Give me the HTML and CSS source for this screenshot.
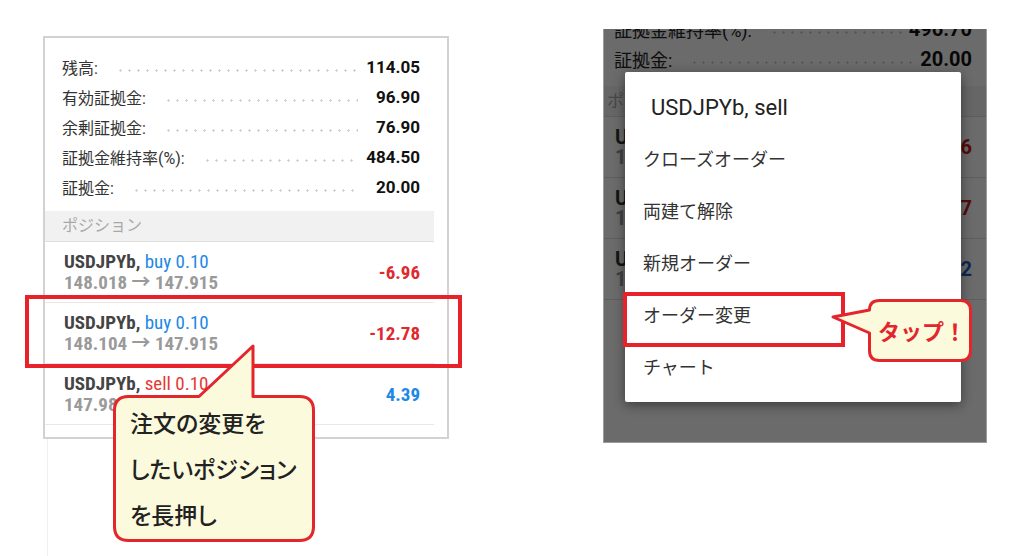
FILE: index.html
```html
<!DOCTYPE html>
<html lang="ja">
<head>
    <meta charset="UTF-8">
    <meta name="viewport" content="width=device-width, initial-scale=1.0">
    <title>オーダー変更の手順</title>
    <link rel="stylesheet" href="styles.css">
</head>
<body>
    <div class="page">
        <!-- 左: ポジション一覧 -->
        <div class="step step-left">
            <div class="screen">
                <div class="summary">
                    <div class="sum-row"><span class="sum-label">残高:</span><span class="leader"></span><span class="sum-value">114.05</span></div>
                    <div class="sum-row"><span class="sum-label">有効証拠金:</span><span class="leader"></span><span class="sum-value">96.90</span></div>
                    <div class="sum-row"><span class="sum-label">余剰証拠金:</span><span class="leader"></span><span class="sum-value">76.90</span></div>
                    <div class="sum-row"><span class="sum-label">証拠金維持率(%):</span><span class="leader"></span><span class="sum-value">484.50</span></div>
                    <div class="sum-row"><span class="sum-label">証拠金:</span><span class="leader"></span><span class="sum-value">20.00</span></div>
                </div>
                <div class="section">ポジション</div>
                <div class="positions">
                    <div class="pos">
                        <div class="pos-info">
                            <div class="pos-title"><b>USDJPYb,</b> <span class="buy">buy 0.10</span></div>
                            <div class="pos-price">148.018 → 147.915</div>
                        </div>
                        <div class="pos-profit loss">-6.96</div>
                    </div>
                    <div class="pos">
                        <div class="pos-info">
                            <div class="pos-title"><b>USDJPYb,</b> <span class="buy">buy 0.10</span></div>
                            <div class="pos-price">148.104 → 147.915</div>
                        </div>
                        <div class="pos-profit loss">-12.78</div>
                    </div>
                    <div class="pos">
                        <div class="pos-info">
                            <div class="pos-title"><b>USDJPYb,</b> <span class="sell">sell 0.10</span></div>
                            <div class="pos-price">147.988 → 147.915</div>
                        </div>
                        <div class="pos-profit gain">4.39</div>
                    </div>
                </div>
            </div>
            <div class="guide-line"></div>

            <div class="mark mark-position"></div>
            <div class="callout callout-press">
                <svg class="callout-shape" width="202" height="147" viewBox="0 0 202 147">
                    <path d="M15.5 1.5 H86 L140 -49 V1.5 H186.5 Q200.5 1.5 200.5 15.5 V131.5 Q200.5 145.5 186.5 145.5 H15.5 Q1.5 145.5 1.5 131.5 V15.5 Q1.5 1.5 15.5 1.5 Z"/>
                </svg>
                <div class="callout-text">注文の変更を<br>したいポジション<br>を長押し</div>
            </div>
        </div>

        <!-- 右: 長押しメニュー -->
        <div class="step step-right">
            <div class="screen-dark">
                <div class="bg-sum-row bg-first"><span class="bg-label">証拠金維持率(%):</span><span class="leader"></span><span class="bg-value">496.70</span></div>
                <div class="bg-sum-row"><span class="bg-label">証拠金:</span><span class="leader"></span><span class="bg-value">20.00</span></div>
                <div class="bg-section">ポジション</div>
                <div class="bg-pos">
                    <div class="bg-info"><div>USDJPYb, buy 0.10</div><div class="bg-price">148.018 → 147.915</div></div>
                    <div class="bg-profit loss">-7.06</div>
                </div>
                <div class="bg-pos">
                    <div class="bg-info"><div>USDJPYb, buy 0.10</div><div class="bg-price">148.104 → 147.915</div></div>
                    <div class="bg-profit loss">-12.87</div>
                </div>
                <div class="bg-pos">
                    <div class="bg-info"><div>USDJPYb, sell 0.10</div><div class="bg-price">147.988 → 147.915</div></div>
                    <div class="bg-profit gain">4.32</div>
                </div>
                <div class="dim"></div>
                <div class="dialog">
                    <div class="dialog-title">USDJPYb, sell</div>
                    <div class="dialog-item">クローズオーダー</div>
                    <div class="dialog-item">両建て解除</div>
                    <div class="dialog-item">新規オーダー</div>
                    <div class="dialog-item">オーダー変更</div>
                    <div class="dialog-item">チャート</div>
                </div>
            </div>

            <div class="mark mark-menu"></div>
            <div class="callout callout-tap">
                <svg class="callout-shape" width="104" height="63" viewBox="0 0 104 63">
                    <path d="M11.5 1.5 H92.5 Q102.5 1.5 102.5 11.5 V51.5 Q102.5 61.5 92.5 61.5 H11.5 Q1.5 61.5 1.5 51.5 V34 L-35 18 L1.5 11 Q1.5 1.5 11.5 1.5 Z"/>
                </svg>
                <div class="callout-text">タップ！</div>
            </div>
        </div>
    </div>
</body>
</html>
```

FILE: styles.css
```css
body {
    margin: 0;
    background-color: #fff;
    font-family: Roboto, "Noto Sans CJK JP", sans-serif;
    color: #333;
    overflow: hidden;
}

.page {
    display: flex;
    align-items: flex-start;
    width: 1024px;
    height: 556px;
    padding-left: 43px;
    box-sizing: border-box;
}

.step {
    position: relative;
}

/* ---------- 左の画面 ---------- */

.step-left {
    width: 406px;
    height: 520px;
    margin-top: 36px;
    display: flex;
    flex-direction: column;
}

.screen {
    border: 2px solid #d2d2d2;
    background-color: #fff;
    padding-bottom: 12px;
}

.guide-line {
    flex: 1;
    margin-left: 4px;
    border-left: 1px solid #efefef;
}

.summary {
    padding: 14px 27px 0 17px;
}

.sum-row {
    display: flex;
    align-items: center;
    height: 30px;
}

.sum-label {
    font-size: 16px;
    color: #333;
}

.leader {
    flex: 1;
    height: 3px;
    margin: 6px 6px 0 18px;
    background-image: radial-gradient(circle, #cbcbcb 0.9px, transparent 1.4px);
    background-size: 9px 3px;
}

.sum-value {
    min-width: 56px;
    text-align: right;
    font-size: 17px;
    font-weight: 700;
    color: #111;
}

.section {
    margin: 9px 13px 0 0;
    height: 30px;
    line-height: 30px;
    padding-left: 17px;
    background-color: #f1f1f1;
    border-bottom: 1px solid #e0e0e0;
    color: #a8a8a8;
    font-size: 16px;
}

.positions {
    margin-right: 13px;
}

.pos {
    display: flex;
    align-items: center;
    justify-content: space-between;
    height: 60px;
    padding: 0 14px 0 19px;
    border-bottom: 1px solid #e8e8e8;
}

.pos-info {
    line-height: 21px;
    font-size: 19px;
    font-stretch: condensed;
}

.pos-title b {
    color: #444;
}

.pos-price {
    color: #9a9a9a;
    font-weight: 700;
}

.buy {
    color: #1e88e5;
}

.sell {
    color: #e53935;
}

.pos-profit {
    font-size: 19px;
    font-weight: 700;
    font-stretch: condensed;
}

.loss {
    color: #e0282e;
}

.gain {
    color: #1e88e5;
}

/* ---------- 右の画面 ---------- */

.step-right {
    width: 384px;
    height: 414px;
    margin-left: 154px;
    margin-top: 29px;
}

.screen-dark {
    position: relative;
    height: 100%;
    overflow: hidden;
    background-color: #fff;
    box-sizing: border-box;
    border: 1px solid #9c9c9c;
    border-top: none;
}

.bg-sum-row {
    display: flex;
    align-items: center;
    height: 30px;
    padding: 0 14px 0 10px;
}

.bg-first {
    margin-top: -15px;
}

.bg-label {
    font-size: 18px;
    color: #222;
}

.bg-value {
    font-size: 20px;
    font-weight: 700;
    color: #111;
}

.bg-section {
    margin-top: 12px;
    height: 30px;
    line-height: 30px;
    padding-left: 3px;
    background-color: #f3f3f3;
    border-bottom: 1px solid #ddd;
    color: #aaa;
    font-size: 17px;
}

.bg-pos {
    display: flex;
    align-items: center;
    justify-content: space-between;
    height: 60px;
    padding: 0 14px 0 11px;
    border-bottom: 1px solid #e0e0e0;
}

.bg-info {
    font-size: 20px;
    line-height: 20px;
    font-weight: 700;
    color: #333;
}

.bg-price {
    color: #999;
}

.bg-profit {
    font-size: 20px;
    font-weight: 700;
}

.bg-profit.loss {
    color: #c62020;
}

.bg-profit.gain {
    color: #1e5fc0;
}

.dim {
    position: absolute;
    inset: 0;
    background-color: rgba(0, 0, 0, 0.58);
}

.dialog {
    position: absolute;
    left: 21px;
    top: 43px;
    width: 336px;
    height: 330px;
    padding: 18px 0 8px;
    box-sizing: border-box;
    background-color: #fff;
    border-radius: 2px;
    box-shadow: 0 3px 12px rgba(0, 0, 0, 0.45);
}

.dialog-title {
    height: 36px;
    line-height: 36px;
    margin-bottom: 8px;
    padding-left: 26px;
    font-size: 22px;
    color: #222;
}

.dialog-item {
    height: 52px;
    line-height: 52px;
    padding-left: 18px;
    font-size: 18px;
    color: #333;
}

/* ---------- 注釈 ---------- */

.mark {
    position: absolute;
    border: 4px solid #e8222a;
    box-sizing: border-box;
}

.mark-position {
    left: -18px;
    top: 259px;
    width: 437px;
    height: 73px;
}

.mark-menu {
    left: 20px;
    top: 263px;
    width: 222px;
    height: 55px;
}

.callout {
    position: absolute;
}

.callout-shape {
    position: absolute;
    left: 0;
    top: 0;
    overflow: visible;
}

.callout-shape path {
    fill: #fbfadc;
    stroke: #e3262c;
    stroke-width: 3;
    stroke-linejoin: round;
}

.callout-text {
    position: relative;
    font-family: "Noto Sans CJK JP", sans-serif;
}

.callout-press {
    left: 70px;
    top: 359px;
    width: 202px;
    height: 147px;
}

.callout-press .callout-text {
    padding: 4px 0 0 17px;
    font-size: 23px;
    line-height: 46px;
    font-weight: 500;
    font-feature-settings: "palt";
    color: #222;
}

.callout-tap {
    left: 265px;
    top: 270px;
    width: 104px;
    height: 63px;
}

.callout-tap .callout-text {
    padding-left: 10px;
    line-height: 63px;
    font-size: 22px;
    font-weight: 700;
    color: #e3262c;
}
```
